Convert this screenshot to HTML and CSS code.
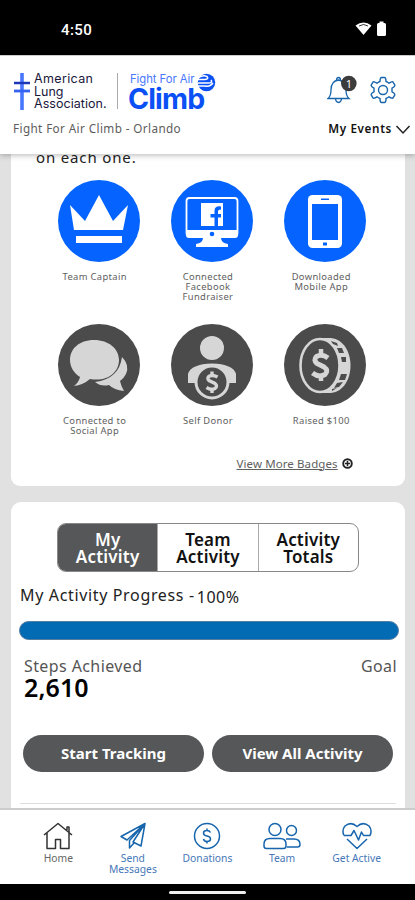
FILE: index.html
```html
<!DOCTYPE html>
<html lang="en">
<head>
<meta charset="utf-8">
<title>Fight For Air Climb</title>
<link rel="stylesheet" href="styles.css">
</head>
<body>
<div class="status">
  <span class="clock">4:50</span>
  <svg class="status-icons" width="34" height="18" viewBox="0 0 34 18"><path d="M.5 4.500Q8.500-1.500 16.500 4.500L8.500 14Z" fill="#fff"/><path d="M4 5Q8.500 2 13 5" fill="none" stroke="#000" stroke-width=".8"/><rect x="22" y="2" width="9" height="13" rx="1.500" fill="#fff"/><path d="M24.500.5h4V3h-4z" fill="#fff"/></svg>
</div>
<header class="header">
  <div class="brand-row">
    <svg class="cross" width="16" height="37" viewBox="0 0 16 37"><path d="M8 0v37" stroke="#4877ff" stroke-width="3.600"/><path d="M0 10h16" stroke="#1d36b5" stroke-width="2.500"/><path d="M0 18h16" stroke="#3562ef" stroke-width="2.800"/></svg>
    <div class="ala"><div class="l1">American</div><div class="l2">Lung</div><div class="l3">Association.</div></div>
    <div class="divider"></div>
    <div class="climb"><div class="fight">Fight For Air</div><div class="big">Climb</div></div>
    <svg class="swirl" width="19" height="19" viewBox="0 0 19 19"><circle cx="9.500" cy="9.500" r="8.700" fill="#0b50f5"/><path d="M0 6Q5 1 10 3.500Q12 6 8 6.500H1M1 10h10Q16 10 14 7M1 13h7q5 1 8-3" fill="none" stroke="#fff" stroke-width="1.500"/></svg>
    <svg class="bell" width="31" height="30" viewBox="0 0 31 30"><path d="M1 23.500Q4 21 4 15Q4 6 11.500 5Q19 6 19 15Q19 21 22 23.500ZM9.500 5Q9.500 2.500 11.500 2.500T13.500 5M8.500 24Q9 27.500 11.500 27.500T14.500 24" fill="#fff" stroke="#1765ad" stroke-width="1.300"/><circle cx="21.800" cy="8.500" r="7.800" fill="#3c3c3c"/><text x="21.800" y="12.500" text-anchor="middle" class="count">1</text></svg>
    <svg class="gear" width="28" height="28" viewBox="0 0 28 28" fill="none" stroke="#1765ad" stroke-width="1.400" stroke-linejoin="round"><path d="M11 5.500Q11 1.500 12.500 1.500H15.500Q17 1.500 17 5.500Q18.500 6 20 7.200Q23.500 5 24.200 6.300L25.700 8.900Q26.500 10.300 23 12.200V15.800Q26.500 17.700 25.700 19.100L24.200 21.700Q23.500 23 20 20.800Q18.500 22 17 22.500Q17 26.500 15.500 26.500H12.500Q11 26.500 11 22.500Q9.500 22 8 20.800Q4.500 23 3.800 21.700L2.300 19.100Q1.500 17.700 5 15.800V12.200Q1.500 10.300 2.300 8.900L3.800 6.300Q4.500 5 8 7.200Q9.500 6 11 5.500Z"/><circle cx="14" cy="14" r="4.500"/></svg>
  </div>
  <div class="event-row"><span class="event">Fight For Air Climb - Orlando</span><span class="my-events">My Events</span><svg width="16" height="11" viewBox="0 0 16 11"><path d="M1.500 2L8 9L14.500 2" fill="none" stroke="#222" stroke-width="1.500"/></svg></div>
</header>
<main class="main">
  <section class="card badges-card">
    <div class="intro"><div class="intro-line">on each one.</div></div>
    <div class="badges">
      <div class="badge"><svg viewBox="0 0 82 82"><circle cx="41" cy="41" r="41" fill="#0564ff"/><path d="M12 25L27 41L41 15L55 41L70 25L65 50H16ZM18 56H64V63H18Z" fill="#fff"/></svg><div class="name">Team Captain</div></div>
      <div class="badge"><svg viewBox="0 0 82 82"><circle cx="41" cy="41" r="41" fill="#0564ff"/><rect x="15.500" y="18" width="51" height="38" rx="3" fill="none" stroke="#fff" stroke-width="1.800"/><path d="M15 50H67V55Q67 58 64 58H50Q50 63 57 64V67H25V64Q32 63 32 58H18Q15 58 15 55Z" fill="#fff"/><circle cx="41" cy="54" r="2.300" fill="#0564ff"/><path d="M30 23H52V46H30Z" fill="#fff"/><path d="M43.500 46V37.500H39.500V34H43.500V31Q43.500 25.500 50 26.500V29.500Q47 29.500 47 31.500V34H50V37.500H47V46Z" fill="#0564ff"/></svg><div class="name">Connected<br>Facebook<br>Fundraiser</div></div>
      <div class="badge"><svg viewBox="0 0 82 82"><circle cx="41" cy="41" r="41" fill="#0564ff"/><rect x="24" y="15" width="34" height="53" rx="4.500" fill="#fff"/><path d="M28 24H54V60H28ZM37 18.500H45V20H37ZM39 62.500H43V65.500H39Z" fill="#0564ff"/></svg><div class="name">Downloaded<br>Mobile App</div></div>
      <div class="badge"><svg viewBox="0 0 82 82"><circle cx="41" cy="41" r="41" fill="#4b4b4b"/><path d="M64 33Q72 41 68 50Q66 54 62 57Q63 62 66 67Q56 66 51 61Q43 63 37 58Q61 55 64 33Z" fill="#d6d6d6"/><path d="M36 16C21 16 12 25 12 36C12 43 16 49 22 53Q21 58 16 62Q25 61 32 55C50 58 61 48 61 36C61 25 51 16 36 16Z" fill="#d6d6d6"/></svg><div class="name">Connected to<br>Social App</div></div>
      <div class="badge"><svg viewBox="0 0 82 82"><circle cx="41" cy="41" r="41" fill="#4b4b4b"/><circle cx="41" cy="24" r="12" fill="#d6d6d6"/><path d="M17 59V50Q20 40 41 39.500Q62 40 65 50V59Z" fill="#d6d6d6"/><circle cx="41" cy="58" r="16" fill="#4b4b4b" stroke="#d6d6d6" stroke-width="3"/><path d="M46.500 53Q42 50.500 38.500 52Q35.500 54 38 56.500L44 59.500Q47 62 44 64.500Q40 66.500 35.500 63.500" fill="none" stroke="#d6d6d6" stroke-width="3.400"/><path d="M41 47.500V52M41 65V69" stroke="#d6d6d6" stroke-width="3.400"/></svg><div class="name">Self Donor</div></div>
      <div class="badge"><svg viewBox="0 0 82 82"><circle cx="41" cy="41" r="41" fill="#4b4b4b"/><path d="M36 14H47C73 17 73 66 47 69H36Z" fill="#d6d6d6"/><ellipse cx="36" cy="41.500" rx="19.500" ry="26.500" fill="#4b4b4b" stroke="#d6d6d6" stroke-width="2.600"/><path d="M47 17L53 19L54 22L49 20ZM53 24L58 24L60 29L55 29ZM57 33L62 33V38H58ZM57 50H63L61 56H55ZM53 59L59 58L55 63L50 64ZM48 65L53 64L48 67Z" fill="#4b4b4b"/><path d="M44 34Q38 29.500 32.500 32.500Q29 36 33 39.500L40 43Q45 46.500 41 50.500Q35 54 28.500 49" fill="none" stroke="#d6d6d6" stroke-width="5"/><path d="M37 25V32M37 51V57" stroke="#d6d6d6" stroke-width="4.500"/></svg><div class="name">Raised $100</div></div>
    </div>
    <div class="more"><a>View More Badges</a><svg width="11" height="11" viewBox="0 0 11 11"><circle cx="5.500" cy="5.500" r="4.300" fill="#fff" stroke="#222" stroke-width="1.900"/><path d="M3 5.500h5M5.500 3v5" stroke="#222" stroke-width="1.500"/></svg></div>
  </section>
  <section class="card activity">
    <div class="tabs"><div class="tab active">My<br>Activity</div><div class="tab">Team<br>Activity</div><div class="tab">Activity<br>Totals</div></div>
    <div class="progress-title"><span class="pt">My Activity Progress -</span><span class="pct">100%</span></div>
    <div class="bar"></div>
    <div class="steps-row"><span class="steps">Steps Achieved</span><span class="goal">Goal</span></div>
    <div class="total"><span>2,610</span></div>
    <div class="buttons"><div class="button"><span class="start">Start Tracking</span></div><div class="button"><span class="view">View All Activity</span></div></div>
    <div class="rule"></div>
  </section>
</main>
<nav class="nav">
  <div class="item home"><svg width="30" height="28" viewBox="0 0 30 28"><path d="M1 13L15 1.500L29 13M4 11V26.500H12.500V17.500H17.500V26.500H26V11M24 8V5H26V10"/></svg><span>Home</span></div>
  <div class="item"><svg width="30" height="28" viewBox="0 0 30 28"><path d="M27 1.500L3 14.500L9 18L27 1.500L23 24L15 20L27 1.500L11.500 18.500V26L16 21"/></svg><span>Send<br>Messages</span></div>
  <div class="item"><svg width="30" height="28" viewBox="0 0 30 28"><circle cx="15" cy="14" r="12.500"/><path d="M18.500 10.500Q17.500 8.500 15 8.500Q11.500 8.500 11.500 11T15 14T18.500 17T15 19.500Q12 19.500 11.500 17M15 6.500V8.500M15 19.500V21.500"/></svg><span>Donations</span></div>
  <div class="item"><svg width="38" height="28" viewBox="0 0 38 28"><circle cx="12" cy="7.500" r="6"/><circle cx="28.500" cy="8.500" r="5"/><path d="M1 24V22Q1 16.500 7 16.500H17Q23 16.500 23 22V24Q23 26.500 20.500 26.500H3.500Q1 26.500 1 24ZM23 17H31Q37 17 37 22.500Q37 25 34.500 25H24"/></svg><span>Team</span></div>
  <div class="item"><svg width="30" height="28" viewBox="0 0 30 28"><path d="M2 13.500Q-.5 8 3 4Q9-1 15 4.500Q21-1 27 4Q30.500 8 28 13.500H21.500L19.500 10L16.500 18L12 8.500L9 13.500H2M5 17L15 26.500L25 17"/></svg><span>Get Active</span></div>
</nav>
<div class="system"><div class="handle"></div></div>
</body>
</html>
```
FILE: styles.css
```css
* { box-sizing: border-box; }
body { margin: 0; width: 415px; height: 900px; overflow: hidden; background: #e1e1e1; font-family: "Noto Sans", sans-serif; color: #222; display: flex; flex-direction: column; }
svg { display: block; flex: none; }
span, a { white-space: nowrap; }
.status { height: 55px; flex: none; background: #000; color: #fff; display: flex; justify-content: space-between; align-items: flex-start; padding: 20px 26px 0 61px; }
.clock { font: 500 15px/20px Roboto, sans-serif; letter-spacing: .4px; }
.status-icons { margin-top: 1px; }
.header { height: 99px; flex: none; background: #fff; box-shadow: 0 1px 6px rgba(0,0,0,.3); position: relative; z-index: 1; border-top: 1px solid #ccc; }
.brand-row { height: 62px; display: flex; align-items: flex-start; padding: 17px 0 0 14px; }
.ala { width: 84px; padding-left: 4px; font: 12.5px/12.5px Inter, sans-serif; color: #18183c; white-space: nowrap; }
.l1 { letter-spacing: .35px; }
.l3 { letter-spacing: .05px; }
.divider { width: 1px; height: 36px; background: #aaa; margin-left: 3px; }
.climb { width: 79px; padding-left: 12px; font-family: Inter, sans-serif; color: #0b50f5; white-space: nowrap; }
.fight { font-size: 11.3px; line-height: 12px; letter-spacing: -.05px; color: #4877ff; }
.big { font-size: 28.5px; font-weight: 700; line-height: 27px; letter-spacing: -.85px; margin-left: -2px; }
.bell { margin: 2px 0 0 111px; }
.gear { margin: 3px 0 0 11px; }
.count { font: 11px "Noto Sans", sans-serif; fill: #fff; }
.event-row { display: flex; align-items: center; height: 22px; padding: 0 4px 0 13px; }
.event { flex: 1; font-size: 11.7px; color: #5c5c5c; letter-spacing: .4px; margin-top: -2px; }
.my-events { font-size: 11.7px; font-weight: 600; color: #111; letter-spacing: .65px; margin: -2px 3px 0 0; }
.main { height: 654px; flex: none; overflow: hidden; padding: 0 10px 0 11px; }
.card { background: #fff; }
.badges-card { height: 332px; border-radius: 0 0 9px 9px; margin-bottom: 16px; }
.intro { height: 25.5px; padding-left: 25px; font-size: 15px; line-height: 20px; letter-spacing: .85px; overflow: hidden; }
.intro-line { margin-top: -7px; }
.badges { display: grid; grid-template-columns: repeat(3, 113.3px); grid-template-rows: 144px 131.5px; padding-left: 31px; }
.badge { display: flex; flex-direction: column; align-items: center; }
.badge svg { width: 82px; height: 82px; }
.name { margin: 10px 8px 0 0; text-align: center; font-size: 9.400px; line-height: 10.200px; color: #606060; white-space: nowrap; letter-spacing: .35px; }
.more { display: flex; align-items: center; height: 16px; margin-left: 225.5px; gap: 4px; font-size: 11.5px; color: #606060; }
.more a { text-decoration: underline; letter-spacing: .1px; }
.activity { height: 306px; border-radius: 10px 10px 0 0; padding-top: 21px; }
.tabs { display: flex; width: 302px; height: 49px; margin-left: 46px; border: 1px solid #888; border-radius: 9px; overflow: hidden; }
.tab { flex: 1; border-left: 1px solid #aaa; text-align: center; font-size: 17px; font-weight: 600; line-height: 17px; padding-top: 7px; color: #111; letter-spacing: .2px; }
.tab.active { background: #555759; color: #fff; border: 0; }
.progress-title { display: flex; padding: 11px 0 0 9px; height: 49px; gap: 2px; font-size: 16px; line-height: 24px; }
.pt { letter-spacing: .65px; }
.pct { padding-top: 2px; letter-spacing: .5px; }
.bar { height: 19px; width: 380px; margin-left: 8px; border-radius: 10px; background: #036ab4; border: 1px solid #557da0; }
.steps-row { display: flex; justify-content: space-between; padding: 14px 8px 0 13px; height: 36px; font-size: 16px; line-height: 24px; color: #555; letter-spacing: .4px; }
.total { padding-left: 13px; font-size: 25px; line-height: 24px; font-weight: 600; color: #000; height: 60px; letter-spacing: .1px; }
.total span { display: block; margin-top: -1px; }
.buttons { display: flex; gap: 8px; padding-left: 12px; }
.button { width: 181px; height: 37px; border-radius: 19px; background: #555759; color: #fff; font-size: 15px; font-weight: 700; display: flex; align-items: center; justify-content: center; }
.button span { margin-top: -2px; }
.rule { height: 1px; margin: 31px 9px 0; background: #ddd; }
.nav { height: 76px; flex: none; background: #fff; border-top: 2px solid #ccc; display: grid; grid-template-columns: repeat(5, 74.6px); padding: 12px 0 0 21px; }
.item { display: flex; flex-direction: column; align-items: center; font-size: 10.300px; line-height: 11px; text-align: center; color: #4778b8; gap: 3px; }
.item svg { fill: none; stroke: #1765ad; stroke-width: 1.500; stroke-linejoin: round; }
.home { color: #666; }
.home svg { stroke: #333; }
.system { height: 16px; flex: none; background: #000; padding-top: 7px; }
.handle { width: 77px; height: 3px; margin-left: 169px; border-radius: 2px; background: #eee; }
```
